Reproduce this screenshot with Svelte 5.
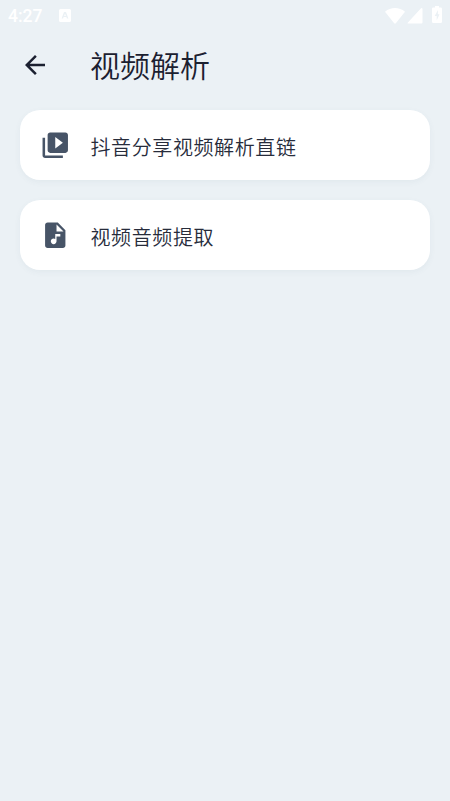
<script>
  const items = [
    {
      label: '抖音分享视频解析直链',
      icon: 'M4 6H2v14c0 1.1.9 2 2 2h14v-2H4V6zm16-4H8c-1.1 0-2 .9-2 2v12c0 1.1.9 2 2 2h12c1.1 0 2-.9 2-2V4c0-1.1-.9-2-2-2zm-8 12.5v-9l6 4.500-6 4.500z'
    },
    {
      label: '视频音频提取',
      icon: 'M14 2H6c-1.1 0-1.99.9-1.99 2L4 20c0 1.1.89 2 1.99 2H18c1.1 0 2-.9 2-2V8l-6-6zm2 11h-3v3.75c0 1.24-1.01 2.25-2.25 2.25S8.5 17.99 8.5 16.75s1.01-2.25 2.25-2.25c.46 0 .89.14 1.25.38V11h4v2zm-3-4V3.5L18.5 9H13z'
    }
  ];
</script>

<div class="screen">
  <div class="status">
    <span class="time">4:27</span>
    <svg class="badge" width="12" height="13" viewBox="0 0 12 13">
      <path fill-rule="evenodd" d="M1.5 0h9A1.5 1.5 0 0 1 12 1.5v10a1.5 1.5 0 0 1-1.5 1.5h-9A1.5 1.5 0 0 1 0 11.5v-10A1.5 1.5 0 0 1 1.5 0zM5 3L2.600 9.500h1.500l.5-1.400h2.800l.5 1.400h1.500L7 3zM6 4.600l.9 2.300H5.100z" />
    </svg>
    <svg class="wifi" width="20" height="16" viewBox="0 0 20 16">
      <path d="M0 3.800C5.600-1.200 14.400-1.200 20 3.800L10.800 15.200q-.8.900-1.600 0z" />
    </svg>
    <svg class="signal" width="16" height="16" viewBox="0 0 16 16">
      <path d="M14.500 0q1 0 1 1v13.500q0 1-1 1H1q-1 0-.3-.8L13.800.4q.3-.4.700-.4z" />
    </svg>
    <svg class="battery" width="10" height="17" viewBox="0 0 10 17">
      <path fill-rule="evenodd" d="M3 0h4v1.500h1.700Q10 1.500 10 2.800v12.900Q10 17 8.700 17H1.300Q0 17 0 15.700V2.800Q0 1.500 1.300 1.500H3zM6 4L2.700 10h2v4.500L7.500 8.300H5.800z" />
    </svg>
  </div>

  <header>
    <svg width="30" height="30" viewBox="0 0 24 24">
      <path d="M20 11H7.830l5.590-5.590L12 4l-8 8 8 8 1.410-1.410L7.830 13H20v-2z" />
    </svg>
    <h1>视频解析</h1>
  </header>

  <main>
    {#each items as item}
      <div class="card">
        <svg width="30.500" height="30.500" viewBox="0 0 24 24"><path d={item.icon} /></svg>
        <span>{item.label}</span>
      </div>
    {/each}
  </main>
</div>

<style>
  .screen {
    height: 801px;
    background: #ebf1f5;
    font-family: 'Noto Sans CJK SC DemiLight', 'Noto Sans CJK SC', sans-serif;
    color: #1b2030;
    overflow: hidden;
  }
  .status {
    display: flex;
    align-items: center;
    height: 31px;
    box-sizing: border-box;
    padding: 0 8px;
    fill: #fff;
    color: #fff;
  }
  .time {
    width: 51px;
    font: 500 17.5px Roboto, sans-serif;
  }
  .wifi {
    margin-left: auto;
    margin-right: 2px;
  }
  .signal {
    margin-right: 9px;
  }
  .battery {
    margin-bottom: 2px;
  }
  header {
    display: flex;
    align-items: center;
    height: 68px;
    padding-left: 20px;
  }
  header svg {
    fill: #1b2030;
    margin-right: 40px;
  }
  h1 {
    margin: 0;
    padding-bottom: 3px;
    font-size: 30px;
    font-weight: 350;
    line-height: 44px;
  }
  main {
    display: flex;
    flex-direction: column;
    gap: 20px;
    padding: 11px 20px 0;
  }
  .card {
    display: flex;
    align-items: center;
    height: 70px;
    box-sizing: border-box;
    padding-left: 19.7px;
    border-radius: 20px;
    background: #fff;
    box-shadow: 0 2px 6px rgba(70, 100, 120, 0.06);
  }
  .card svg {
    fill: #475467;
    margin-right: 20.3px;
  }
  .card span {
    padding-top: 4px;
    color: #272c3b;
    font-size: 20px;
    font-weight: 350;
    letter-spacing: 0.6px;
    line-height: 30px;
  }
</style>
